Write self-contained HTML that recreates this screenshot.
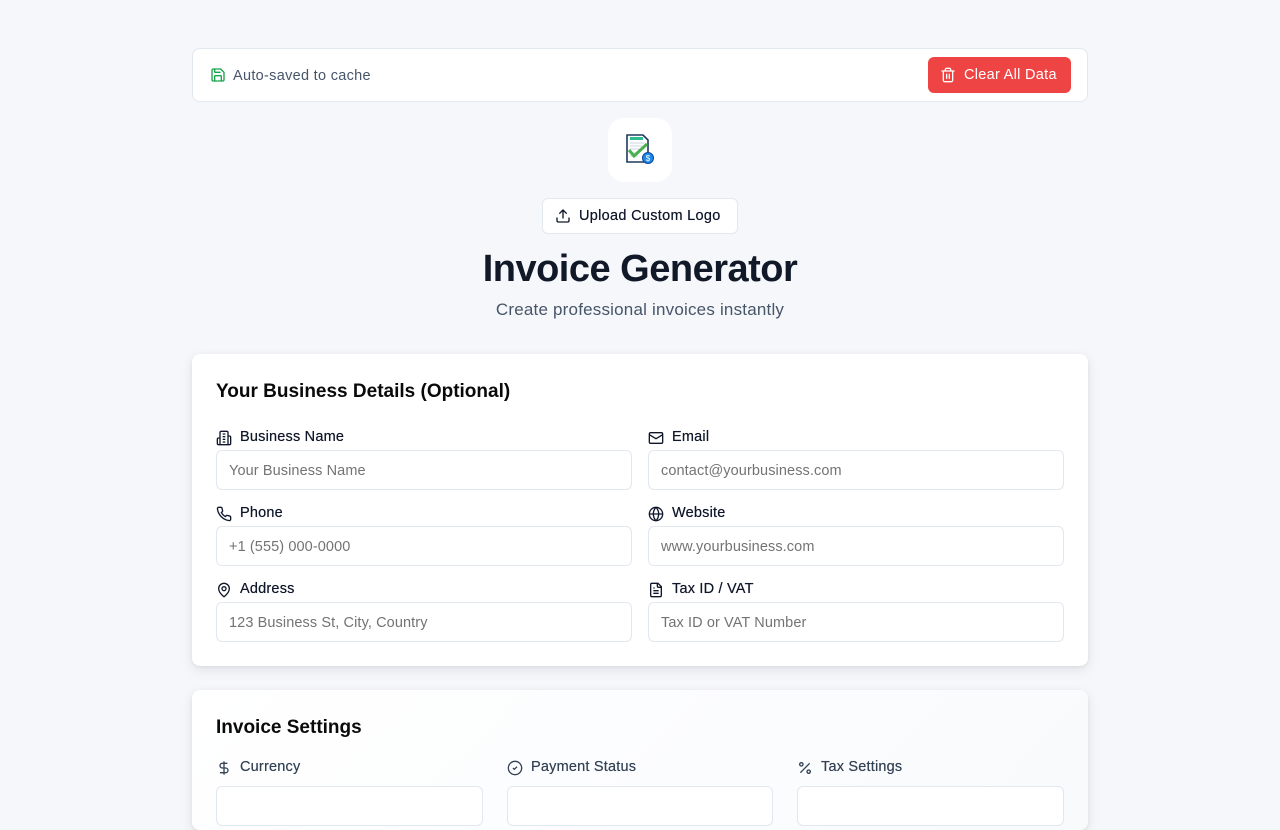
<!DOCTYPE html>
<html><head><meta charset="utf-8"><style>
*{box-sizing:border-box;margin:0;padding:0}
body{width:1280px;height:800px;overflow:hidden;background:#f5f7fa;font-family:"Liberation Sans",sans-serif;color:#0f172a;position:relative}
.abs{position:absolute}
.bar{left:192px;top:48px;width:896px;height:54px;background:#fff;border:1px solid #e2e8f0;border-radius:8px}
.bar .t{position:absolute;left:40px;top:18px;font-size:14.5px;color:#475569;letter-spacing:0.3px;line-height:18px}
.clear{position:absolute;right:16px;top:8px;width:143px;height:36px;background:#ef4444;border-radius:6px;color:#fff;font-size:14.5px;letter-spacing:0.3px}
.clear span{position:absolute;left:36px;top:9px;line-height:18px}
.logo{left:608px;top:118px;width:64px;height:64px;background:#fff;border-radius:16px}
.up{left:542px;top:198px;width:196px;height:36px;background:#fff;border:1px solid #e2e8f0;border-radius:6px;font-size:14.5px;color:#0f172a;letter-spacing:0.3px}
.up span{position:absolute;left:36px;top:8px;line-height:18px;text-shadow:0 0 0.4px #0f172a}
h1{position:absolute;left:0;width:1280px;top:248px;text-align:center;font-size:38px;font-weight:bold;color:#111827;letter-spacing:-0.5px}
.sub{left:0;width:1280px;top:300px;text-align:center;font-size:17px;color:#475569;letter-spacing:0.2px}
.card{left:192px;width:896px;background:#fff;border-radius:8px;box-shadow:0 4px 12px rgba(15,23,42,.09),0 1px 3px rgba(15,23,42,.06)}
.card h2{position:absolute;left:24px;font-size:19px;font-weight:bold;color:#0a0a0a}
.lbl{position:absolute;font-size:14.5px;color:#0f172a;letter-spacing:0.2px}
.lbl svg{position:absolute;left:0;top:1px}
.lbl span{position:absolute;left:24px;top:-1px;line-height:18px;white-space:nowrap;text-shadow:0 0 0.4px currentColor}
.in{position:absolute;height:40px;border:1px solid #e2e8f0;border-radius:6px;background:#fff;font-size:14.5px;color:#737373;padding:11px 12px;line-height:18px;letter-spacing:0.1px}
</style></head><body>
<div class="abs bar">
<svg class="abs" style="left:17px;top:18px" width="16" height="16" viewBox="0 0 24 24" fill="none" stroke="#16a34a" stroke-width="2" stroke-linecap="round" stroke-linejoin="round"><path d="M15.2 3a2 2 0 0 1 1.4.6l3.8 3.8a2 2 0 0 1 .6 1.4V19a2 2 0 0 1-2 2H5a2 2 0 0 1-2-2V5a2 2 0 0 1 2-2z"/><path d="M17 21v-7a1 1 0 0 0-1-1H8a1 1 0 0 0-1 1v7"/><path d="M7 3v4a1 1 0 0 0 1 1h7"/></svg>
<div class="t">Auto-saved to cache</div>
<div class="clear"><svg class="abs" style="left:12px;top:10px" width="16" height="16" viewBox="0 0 24 24" fill="none" stroke="#fff" stroke-width="2" stroke-linecap="round"><path d="M3 6h18M19 6v14c0 1-1 2-2 2H7c-1 0-2-1-2-2V6M8 6V4c0-1 1-2 2-2h4c1 0 2 1 2 2v2M10 11v6M14 11v6"/></svg><span>Clear All Data</span></div>
</div>
<div class="abs logo"><svg class="abs" style="left:16px;top:14px" width="34" height="36" viewBox="0 0 34 36"><path d="M3 3h16l5 5v22H3z" fill="#fff" stroke="#1e3a5f" stroke-width="1.6"/><rect x="6" y="5" width="13" height="3" fill="#2dbd8e"/><path d="M6 11h14M6 14h12M6 17h10M6 21h8M6 24h8" stroke="#cbd5e1"/><path d="M5 18l5 6 13-12" fill="none" stroke="#4caf50" stroke-width="3"/><circle cx="24" cy="26" r="5.5" fill="#1e88e5" stroke="#0d47a1"/><text x="24" y="29" font-size="8" fill="#fff" text-anchor="middle" font-family="Liberation Sans">$</text></svg></div>
<div class="abs up"><svg class="abs" style="left:12px;top:9px" width="16" height="16" viewBox="0 0 24 24" fill="none" stroke="#0f172a" stroke-width="2" stroke-linecap="round" stroke-linejoin="round"><path d="M21 15v4a2 2 0 0 1-2 2H5a2 2 0 0 1-2-2v-4M17 8l-5-5-5 5M12 3v12"/></svg><span>Upload Custom Logo</span></div>
<h1>Invoice Generator</h1>
<div class="abs sub">Create professional invoices instantly</div>

<div class="abs card" style="top:354px;height:312px">
<h2 style="top:27px">Your Business Details (Optional)</h2>
<div class="lbl" style="left:24px;top:75px"><svg width="16" height="16" viewBox="0 0 24 24" fill="none" stroke="#0f172a" stroke-width="2"><path d="M6 22V4a2 2 0 0 1 2-2h8a2 2 0 0 1 2 2v18zM6 12H4a2 2 0 0 0-2 2v6a2 2 0 0 0 2 2h2M18 9h2a2 2 0 0 1 2 2v9a2 2 0 0 1-2 2h-2M10 6h4M10 10h4M10 14h4M10 18h4"/></svg><span>Business Name</span></div>
<div class="in" style="left:24px;top:96px;width:416px">Your Business Name</div>
<div class="lbl" style="left:456px;top:75px"><svg width="16" height="16" viewBox="0 0 24 24" fill="none" stroke="#0f172a" stroke-width="2"><rect x="2" y="4" width="20" height="16" rx="2"/><path d="m22 7-10 6L2 7"/></svg><span>Email</span></div>
<div class="in" style="left:456px;top:96px;width:416px">contact@yourbusiness.com</div>
<div class="lbl" style="left:24px;top:151px"><svg width="16" height="16" viewBox="0 0 24 24" fill="none" stroke="#0f172a" stroke-width="2"><path d="M22 16.9v3a2 2 0 0 1-2.2 2 19.8 19.8 0 0 1-8.6-3.1 19.5 19.5 0 0 1-6-6A19.8 19.8 0 0 1 2.1 4.2 2 2 0 0 1 4.1 2h3a2 2 0 0 1 2 1.7c.1 1 .4 1.900.7 2.8a2 2 0 0 1-.5 2.1L8 9.9a16 16 0 0 0 6 6l1.3-1.3a2 2 0 0 1 2.1-.4c.9.3 1.8.6 2.8.7a2 2 0 0 1 1.7 2z"/></svg><span>Phone</span></div>
<div class="in" style="left:24px;top:172px;width:416px">+1 (555) 000-0000</div>
<div class="lbl" style="left:456px;top:151px"><svg width="16" height="16" viewBox="0 0 24 24" fill="none" stroke="#0f172a" stroke-width="2"><circle cx="12" cy="12" r="10"/><path d="M12 2a14.5 14.5 0 0 0 0 20 14.5 14.5 0 0 0 0-20M2 12h20"/></svg><span>Website</span></div>
<div class="in" style="left:456px;top:172px;width:416px">www.yourbusiness.com</div>
<div class="lbl" style="left:24px;top:227px"><svg width="16" height="16" viewBox="0 0 24 24" fill="none" stroke="#0f172a" stroke-width="2"><path d="M20 10c0 5-5.5 10.2-7.4 11.8a1 1 0 0 1-1.2 0C9.5 20.2 4 15 4 10a8 8 0 0 1 16 0"/><circle cx="12" cy="10" r="3"/></svg><span>Address</span></div>
<div class="in" style="left:24px;top:248px;width:416px">123 Business St, City, Country</div>
<div class="lbl" style="left:456px;top:227px"><svg width="16" height="16" viewBox="0 0 24 24" fill="none" stroke="#0f172a" stroke-width="2"><path d="M15 2H6a2 2 0 0 0-2 2v16a2 2 0 0 0 2 2h12a2 2 0 0 0 2-2V7z"/><path d="M14 2v4a2 2 0 0 0 2 2h4M10 9H8M16 13H8M16 17H8"/></svg><span>Tax ID / VAT</span></div>
<div class="in" style="left:456px;top:248px;width:416px">Tax ID or VAT Number</div>
</div>

<div class="abs card" style="top:690px;height:140px;background:linear-gradient(135deg,#fff,#f8fafc)">
<h2 style="top:27px">Invoice Settings</h2>
<div class="lbl" style="left:24px;top:69px;color:#334155"><svg width="16" height="16" viewBox="0 0 24 24" fill="none" stroke="#334155" stroke-width="2"><path d="M12 2v20M17 5H9.5a3.5 3.5 0 0 0 0 7h5a3.5 3.5 0 0 1 0 7H6"/></svg><span>Currency</span></div>
<div class="in" style="left:24px;top:96px;width:267px"></div>
<div class="lbl" style="left:315px;top:69px;color:#334155"><svg width="16" height="16" viewBox="0 0 24 24" fill="none" stroke="#334155" stroke-width="2"><circle cx="12" cy="12" r="10"/><path d="m9 12 2 2 4-4"/></svg><span>Payment Status</span></div>
<div class="in" style="left:315px;top:96px;width:266px"></div>
<div class="lbl" style="left:605px;top:69px;color:#334155"><svg width="16" height="16" viewBox="0 0 24 24" fill="none" stroke="#334155" stroke-width="2"><path d="M19 5 5 19"/><circle cx="6.5" cy="6.5" r="2.5"/><circle cx="17.5" cy="17.5" r="2.5"/></svg><span>Tax Settings</span></div>
<div class="in" style="left:605px;top:96px;width:267px"></div>
</div>
</body></html>
